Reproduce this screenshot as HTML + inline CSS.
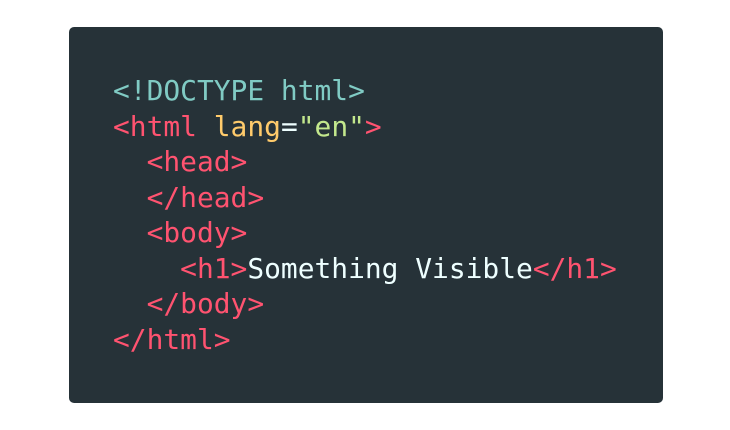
<!DOCTYPE html>
<html><head><style>
html,body{margin:0;background:#fff;width:730px;height:430px;overflow:hidden}
.box{position:absolute;left:69px;top:27px;width:594px;height:376px;background:#263238;border-radius:5px}
pre{position:absolute;left:44px;top:46px;margin:0;font-family:"DejaVu Sans Mono","Liberation Mono",monospace;font-size:27.9px;line-height:35.5px;color:#eeffff}
.t{color:#80cbc4}.p{color:#ff5370}.y{color:#ffcb6b}.g{color:#c3e88d}
</style></head><body><div class="box"><pre><span class="t">&lt;!DOCTYPE html&gt;</span>
<span class="p">&lt;html</span> <span class="y">lang</span>=<span class="g">"en"</span><span class="p">&gt;</span>
  <span class="p">&lt;head&gt;</span>
  <span class="p">&lt;/head&gt;</span>
  <span class="p">&lt;body&gt;</span>
    <span class="p">&lt;h1&gt;</span>Something Visible<span class="p">&lt;/h1&gt;</span>
  <span class="p">&lt;/body&gt;</span>
<span class="p">&lt;/html&gt;</span></pre></div></body></html>
